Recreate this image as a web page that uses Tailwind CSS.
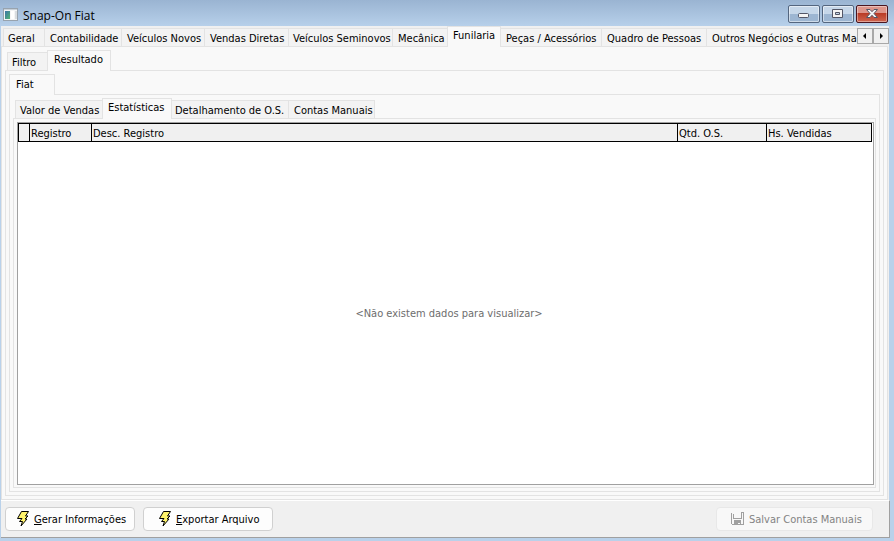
<!DOCTYPE html>
<html lang="pt-BR">
<head>
    <meta charset="UTF-8">
    <meta name="viewport" content="width=device-width, initial-scale=1.0">
    <title>Snap-On Fiat</title>
    <script src="https://cdn.jsdelivr.net/npm/@tailwindcss/browser@4"></script>
</head>
<body class="min-h-screen flex flex-col overflow-hidden bg-[#b9d1ea] pl-px pr-[5px] pb-[3px] font-['Tahoma','DejaVu_Sans_Condensed','DejaVu_Sans',sans-serif] text-[11px] leading-4 text-black">
    <!-- Title bar -->
    <header class="-ml-px -mr-[5px] h-[26px] shrink-0 flex items-start justify-between bg-linear-to-b from-[#9ab4d2] to-[#b7d0ea] pl-[3px] pr-1.5">
        <div class="flex items-center gap-1 pt-1.5">
            <svg class="w-4 h-4" viewBox="0 0 16 16">
                <defs>
                    <linearGradient id="app" x1="0" y1="0" x2="1" y2="1">
                        <stop offset="0" stop-color="#3b73a8"/>
                        <stop offset="1" stop-color="#52b573"/>
                    </linearGradient>
                </defs>
                <rect x="0.5" y="1.5" width="14" height="12" fill="#f4f5f6" stroke="#98a3ae"/>
                <rect x="1" y="2" width="13" height="1" fill="#c7d0d8"/>
                <rect x="2" y="4" width="5" height="8" fill="url(#app)"/>
                <rect x="8" y="4" width="3" height="8" fill="#fff"/>
                <rect x="12" y="4" width="2" height="8" fill="#d9dde0"/>
            </svg>
            <h1 class="pt-0.5 font-['Segoe_UI','Open_Sans',sans-serif] text-xs">Snap-On Fiat</h1>
        </div>
        <div class="flex gap-0.5 pt-[5px]">
            <button aria-label="Minimizar" class="w-8 h-[18px] flex items-center justify-center rounded-xs border border-[#54667f] bg-linear-to-b from-[#c6d7e9] from-50% to-[#9db6d2] to-50% shadow-[inset_0_0_0_1px_rgba(255,255,255,0.5)]">
                <svg class="w-3 h-3" viewBox="0 0 12 12"><rect x="0.5" y="5.5" width="10" height="4" rx="1" fill="#f4f4f4" stroke="#535666"/></svg>
            </button>
            <button aria-label="Maximizar" class="w-8 h-[18px] flex items-center justify-center rounded-xs border border-[#54667f] bg-linear-to-b from-[#c6d7e9] from-50% to-[#9db6d2] to-50% shadow-[inset_0_0_0_1px_rgba(255,255,255,0.5)]">
                <svg class="w-3 h-3" viewBox="0 0 12 12"><path fill="#f4f4f4" stroke="#535666" fill-rule="evenodd" d="M.5 1.500h10v8H.5zM3.500 4.500h4v2h-4z"/></svg>
            </button>
            <button aria-label="Fechar" class="w-8 h-[18px] flex items-center justify-center rounded-xs border border-[#4a1520] bg-linear-to-b from-[#dd958b] from-45% via-[#b93a25] via-45% to-[#cf6550] shadow-[inset_0_0_0_1px_rgba(255,255,255,0.4)]">
                <svg class="w-3 h-3" viewBox="0 0 12 12"><path fill="#f4f4f4" stroke="#535666" d="M.5 1.500h3.500L6 3.700 8 1.500h3.500L8 5.500l3.500 4H8L6 7.300 4 9.500H.5l3.500-4z"/></svg>
            </button>
        </div>
    </header>

    <main class="flex-1 flex flex-col bg-[#f0f0f0]">
        <!-- Departments -->
        <nav class="h-5 flex items-end pl-0.5">
            <button class="w-[42px] h-[18px] pl-1 pt-0.5 text-left whitespace-nowrap bg-[#f3f3f3] border border-b-0 border-[#e3e3e3]">Geral</button>
            <button class="w-[77px] h-[18px] pl-[5px] pt-0.5 text-left whitespace-nowrap bg-[#f3f3f3] border-t border-r border-[#e3e3e3]">Contabilidade</button>
            <button class="w-[83px] h-[18px] pl-[5px] pt-0.5 text-left whitespace-nowrap bg-[#f3f3f3] border-t border-r border-[#e3e3e3]">Veículos Novos</button>
            <button class="w-[84px] h-[18px] pl-[5px] pt-0.5 text-left whitespace-nowrap bg-[#f3f3f3] border-t border-r border-[#e3e3e3]">Vendas Diretas</button>
            <button class="w-[104px] h-[18px] pl-1 pt-0.5 text-left whitespace-nowrap bg-[#f3f3f3] border-t border-r border-[#e3e3e3]">Veículos Seminovos</button>
            <button class="w-[54px] h-[18px] pl-[5px] pt-0.5 text-left whitespace-nowrap bg-[#f3f3f3] border-t border-[#e3e3e3]">Mecânica</button>
            <button class="relative w-[54px] h-[21px] -mb-px pl-[5px] pb-0.5 text-left whitespace-nowrap bg-[#f9f9f9] border border-b-0 border-[#e3e3e3]">Funilaria</button>
            <button class="w-[101px] h-[18px] pl-[5px] pt-0.5 text-left whitespace-nowrap bg-[#f3f3f3] border-t border-r border-[#e3e3e3]">Peças / Acessórios</button>
            <button class="w-[105px] h-[18px] pl-[5px] pt-0.5 text-left whitespace-nowrap bg-[#f3f3f3] border-t border-r border-[#e3e3e3]">Quadro de Pessoas</button>
            <button class="flex-1 min-w-0 h-[18px] pl-[5px] pt-0.5 text-left whitespace-nowrap overflow-hidden bg-[#f3f3f3] border-t border-[#e3e3e3]">Outros Negócios e Outras Mar</button>
            <div class="flex self-start pt-0.5">
                <button aria-label="Anterior" class="w-4 h-4 flex items-center justify-center bg-[#f0f0f0] border border-[#a8a8a8]">
                    <svg class="w-2 h-2" viewBox="0 0 8 8"><path d="M5 1v6L2 4z"/></svg>
                </button>
                <button aria-label="Próximo" class="w-4 h-4 flex items-center justify-center bg-[#f0f0f0] border border-[#a8a8a8]">
                    <svg class="w-2 h-2" viewBox="0 0 8 8"><path d="M3 1v6l3-3z"/></svg>
                </button>
            </div>
        </nav>

        <section class="flex-1 flex flex-col mr-px p-[3px] bg-[#f9f9f9] border border-[#e3e3e3]">
            <nav class="h-5 flex items-end pl-0.5">
                <button class="w-10 h-[18px] pl-1 pt-0.5 text-left bg-[#f3f3f3] border border-b-0 border-r-0 border-[#e3e3e3]">Filtro</button>
                <button class="relative w-16 h-[21px] -mb-px pl-1.5 pb-0.5 text-left bg-[#f9f9f9] border border-b-0 border-[#e3e3e3]">Resultado</button>
            </nav>
            <div class="flex-1 flex flex-col p-[3px] border border-[#e3e3e3]">
                <nav class="h-5 flex items-end">
                    <button class="relative w-[46px] h-[21px] -mb-px pl-1.5 text-left bg-[#f9f9f9] border border-b-0 border-[#e3e3e3]">Fiat</button>
                </nav>
                <div class="flex-1 flex flex-col p-[3px] border border-[#e3e3e3]">
                    <nav class="h-5 flex items-end pl-0.5">
                        <button class="w-[87px] h-[18px] pl-1 pt-0.5 text-left whitespace-nowrap bg-[#f3f3f3] border border-b-0 border-r-0 border-[#e3e3e3]">Valor de Vendas</button>
                        <button class="relative w-[70px] h-[21px] -mb-px pl-[5px] pb-0.5 text-left bg-[#f9f9f9] border border-b-0 border-[#e3e3e3]">Estatísticas</button>
                        <button class="w-[117px] h-[18px] pl-[3px] pt-0.5 text-left whitespace-nowrap bg-[#f3f3f3] border-t border-r border-[#e3e3e3]">Detalhamento de O.S.</button>
                        <button class="w-[86px] h-[18px] pl-[5px] pt-0.5 text-left whitespace-nowrap bg-[#f3f3f3] border-t border-r border-[#e3e3e3]">Contas Manuais</button>
                    </nav>
                    <div class="flex-1 flex flex-col pt-[3px] pl-[3px] pr-px pb-0.5 border border-[#e3e3e3]">
                        <!-- Grid -->
                        <div class="flex-1 flex flex-col pr-px bg-white border border-[#a0a0a0]">
                            <table class="w-full table-fixed border-separate border-spacing-0 border-y border-l border-black bg-[#f0f0f0]">
                                <thead>
                                    <tr class="h-[17px] leading-[15px]">
                                        <th class="w-[11px] p-0 border-r border-black"></th>
                                        <th class="w-[62px] pl-px pt-0.5 text-left font-normal border-r border-black">Registro</th>
                                        <th class="pl-px pt-0.5 text-left font-normal border-r border-black">Desc. Registro</th>
                                        <th class="w-[89px] pl-px pt-0.5 text-left font-normal border-r border-black">Qtd. O.S.</th>
                                        <th class="w-[105px] pl-px pt-0.5 text-left font-normal border-r border-black">Hs. Vendidas</th>
                                    </tr>
                                </thead>
                            </table>
                            <p class="flex-1 flex items-center justify-center pl-2 pt-0.5 text-[#6d6d6d]">&lt;Não existem dados para visualizar&gt;</p>
                        </div>
                    </div>
                </div>
            </div>
        </section>

        <!-- Actions -->
        <footer class="h-[38px] -mr-px flex items-center gap-2 pl-1 pr-4 bg-[#f0f0f0] border-t border-t-white border-r border-b border-r-[#a0a0a0] border-b-[#a0a0a0]">
            <button class="w-[130px] h-6 flex items-center gap-0.5 pl-2.5 whitespace-nowrap bg-[#fdfdfd] border border-[#d0d0d0] rounded">
                <svg class="w-4 h-4" viewBox="0 0 16 16"><path fill="#fff36b" stroke="#000" d="M5.500.5h7l-3 4.500h2.500l-3 3h2l-6 7 1.500-4.500H3.500L6 7.500H1.500z"/></svg>
                <span class="pt-0.5"><u>G</u>erar Informações</span>
            </button>
            <button class="w-[130px] h-6 flex items-center gap-0.5 pl-3.5 whitespace-nowrap bg-[#fdfdfd] border border-[#d0d0d0] rounded">
                <svg class="w-4 h-4" viewBox="0 0 16 16"><path fill="#fff36b" stroke="#000" d="M5.500.5h7l-3 4.500h2.500l-3 3h2l-6 7 1.500-4.500H3.500L6 7.500H1.500z"/></svg>
                <span class="pt-0.5"><u>E</u>xportar Arquivo</span>
            </button>
            <button disabled class="ml-auto w-[157px] h-6 flex items-center gap-0.5 pl-3.5 whitespace-nowrap bg-[#f8f8f8] border border-[#e8e8e8] rounded text-[#838383]">
                <svg class="w-4 h-4" viewBox="0 0 16 16" shape-rendering="crispEdges"><path fill="#a0a0a0" d="M0 2h1v11H0zM1 13h12v1H1zM12 1h1v13h-1zM10 1h3v1h-3zM2 3h1v5H2zM3 7h7v1H3zM10 1h1v7h-1zM3 9h7v4H9v-1H7v1H3z"/></svg>
                <span class="pt-0.5">Salvar Contas Manuais</span>
            </button>
        </footer>
    </main>
</body>
</html>
